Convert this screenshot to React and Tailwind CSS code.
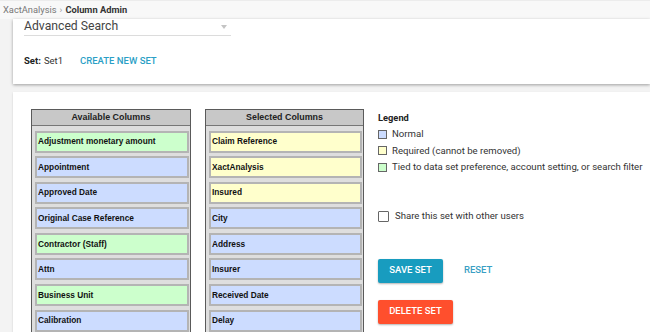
import React from 'react';

const available = [
  { label: 'Adjustment monetary amount', kind: 'tied' },
  { label: 'Appointment', kind: 'normal' },
  { label: 'Approved Date', kind: 'normal' },
  { label: 'Original Case Reference', kind: 'normal' },
  { label: 'Contractor (Staff)', kind: 'tied' },
  { label: 'Attn', kind: 'normal' },
  { label: 'Business Unit', kind: 'tied' },
  { label: 'Calibration', kind: 'normal' },
];

const selected = [
  { label: 'Claim Reference', kind: 'required' },
  { label: 'XactAnalysis', kind: 'required' },
  { label: 'Insured', kind: 'required' },
  { label: 'City', kind: 'normal' },
  { label: 'Address', kind: 'normal' },
  { label: 'Insurer', kind: 'normal' },
  { label: 'Received Date', kind: 'normal' },
  { label: 'Delay', kind: 'normal' },
];

const kindBg = {
  normal: 'bg-[#ccdcff]',
  required: 'bg-[#ffffcc]',
  tied: 'bg-[#ccffcc]',
};

const ColumnList = ({ title, items, width }) => (
  <div className={`${width} shrink-0 self-start border border-[#5a5a5a] bg-[#dedede] pb-[4px] font-['Liberation_Sans',Arial,sans-serif]`}>
    <div className="h-[16px] bg-[#c8c8c8] border-b border-[#777] flex items-center justify-center text-[8.9px] font-bold text-[#222]">
      {title}
    </div>
    <div className="flex flex-col gap-[3.6px] pt-[4.5px] pl-[3px] pr-[1px]">
      {items.map((item) => (
        <div
          key={item.label}
          className={`h-[22px] border-2 border-[#b4b4b4] ${kindBg[item.kind]} flex items-center pl-[1px] text-[8.3px] font-bold text-[#111] whitespace-nowrap`}
        >
          {item.label}
        </div>
      ))}
    </div>
  </div>
);

const LegendItem = ({ color, children }) => (
  <div className="flex items-center gap-[5px] h-[16.5px]">
    <span className={`w-[9px] h-[9px] border border-[#666] ${color}`} />
    <span>{children}</span>
  </div>
);

export default function App() {
  return (
    <div className="w-[650px] h-[332px] overflow-hidden bg-[#f3f3f3] font-['Roboto',sans-serif] text-[#333]">
      {/* breadcrumb */}
      <div className="h-[19px] bg-[#f8f8f8] border-t border-[#ececec] flex items-center pl-[3px] text-[9.3px]">
        <span className="text-[#777]">XactAnalysis</span>
        <span className="text-[#999] mx-[3px]">›</span>
        <span className="font-bold text-[#333]">Column Admin</span>
      </div>

      {/* set card */}
      <div className="ml-[13px] h-[65px] bg-white shadow-[0_1px_3px_rgba(0,0,0,0.35)] pl-[11px]">
        <div className="w-[207px] h-[17px] border-b border-[#dcdcdc] flex items-center justify-between pr-[4px]">
          <span className="text-[12.2px] text-[#444] -mt-[1px]">Advanced Search</span>
          <span className="w-0 h-0 border-l-[3.5px] border-r-[3.5px] border-t-[4px] border-l-transparent border-r-transparent border-t-[#c4c4c4]" />
        </div>
        <div className="flex items-center h-[18px] mt-[16px] text-[9.5px]">
          <span className="font-bold text-[#222]">Set:</span>
          <span className="ml-[3px] text-[#333]">Set1</span>
          <span className="ml-[17px] text-[#2b9fc6] font-medium">CREATE NEW SET</span>
        </div>
      </div>

      {/* columns card */}
      <div className="ml-[13px] mt-[8px] h-[260px] bg-white shadow-[0_1px_2px_rgba(0,0,0,0.15)] flex pl-[18px] pt-[17px] gap-[14px]">
        <ColumnList title="Available Columns" items={available} width="w-[160px]" />
        <ColumnList title="Selected Columns" items={selected} width="w-[159px]" />

        <div className="flex flex-col text-[9.6px] text-[#333] pt-[1px]">
          <div className="font-bold text-[9.3px] h-[16px] flex items-center text-[#222]">Legend</div>
          <LegendItem color="bg-[#ccdcff]">Normal</LegendItem>
          <LegendItem color="bg-[#ffffcc]">Required (cannot be removed)</LegendItem>
          <LegendItem color="bg-[#ccffcc]">Tied to data set preference, account setting, or search filter</LegendItem>

          <label className="flex items-center gap-[6px] mt-[33px] h-[16px]">
            <span className="w-[11px] h-[11px] border border-[#666] rounded-[1px] bg-white" />
            <span>Share this set with other users</span>
          </label>

          <div className="flex items-center mt-[34px]">
            <button className="w-[65px] h-[24px] rounded-[2px] bg-[#189cbf] text-white text-[9.5px] font-medium shadow-[0_1px_2px_rgba(0,0,0,0.3)]">
              SAVE SET
            </button>
            <button className="ml-[21px] text-[9.5px] font-medium text-[#3a9fc4]">RESET</button>
          </div>

          <div className="mt-[17px]">
            <button className="w-[75px] h-[24px] rounded-[2px] bg-[#ff4f2d] text-white text-[9.5px] font-medium shadow-[0_1px_2px_rgba(0,0,0,0.3)]">
              DELETE SET
            </button>
          </div>
        </div>
      </div>
    </div>
  );
}
